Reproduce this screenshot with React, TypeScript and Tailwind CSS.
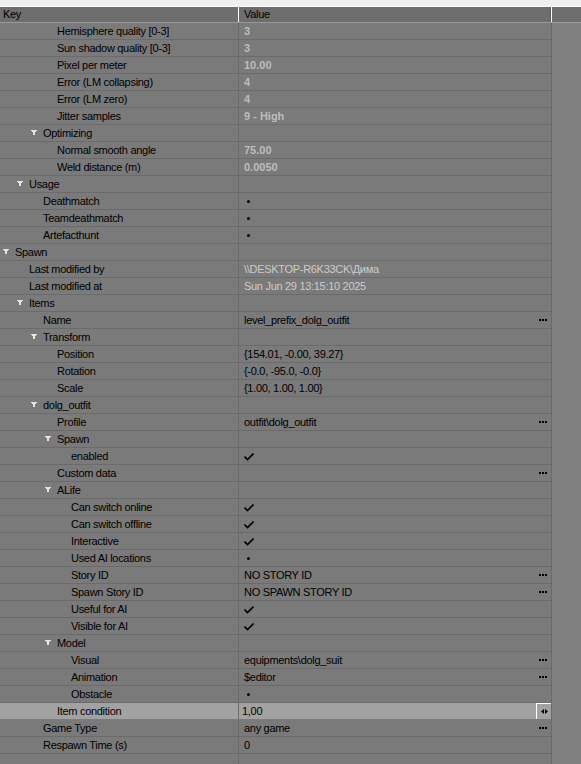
import React from 'react';

type Kind = 'text' | 'bold' | 'gray' | 'dot' | 'check' | 'none';

type Row = {
  label: string;
  level: number;
  group?: boolean;
  value?: string;
  kind?: Kind;
  btn?: boolean;
  selected?: boolean;
};

const rows: Row[] = [
  { label: 'Hemisphere quality [0-3]', level: 3, value: '3', kind: 'bold' },
  { label: 'Sun shadow quality [0-3]', level: 3, value: '3', kind: 'bold' },
  { label: 'Pixel per meter', level: 3, value: '10.00', kind: 'bold' },
  { label: 'Error (LM collapsing)', level: 3, value: '4', kind: 'bold' },
  { label: 'Error (LM zero)', level: 3, value: '4', kind: 'bold' },
  { label: 'Jitter samples', level: 3, value: '9 - High', kind: 'bold' },
  { label: 'Optimizing', level: 2, group: true },
  { label: 'Normal smooth angle', level: 3, value: '75.00', kind: 'bold' },
  { label: 'Weld distance (m)', level: 3, value: '0.0050', kind: 'bold' },
  { label: 'Usage', level: 1, group: true },
  { label: 'Deathmatch', level: 2, kind: 'dot' },
  { label: 'Teamdeathmatch', level: 2, kind: 'dot' },
  { label: 'Artefacthunt', level: 2, kind: 'dot' },
  { label: 'Spawn', level: 0, group: true },
  { label: 'Last modified by', level: 1, value: '\\\\DESKTOP-R6K33CK\\Дима', kind: 'gray' },
  { label: 'Last modified at', level: 1, value: 'Sun Jun 29 13:15:10 2025', kind: 'gray' },
  { label: 'Items', level: 1, group: true },
  { label: 'Name', level: 2, value: 'level_prefix_dolg_outfit', btn: true },
  { label: 'Transform', level: 2, group: true },
  { label: 'Position', level: 3, value: '{154.01, -0.00, 39.27}' },
  { label: 'Rotation', level: 3, value: '{-0.0, -95.0, -0.0}' },
  { label: 'Scale', level: 3, value: '{1.00, 1.00, 1.00}' },
  { label: 'dolg_outfit', level: 2, group: true },
  { label: 'Profile', level: 3, value: 'outfit\\dolg_outfit', btn: true },
  { label: 'Spawn', level: 3, group: true },
  { label: 'enabled', level: 4, kind: 'check' },
  { label: 'Custom data', level: 3, btn: true },
  { label: 'ALife', level: 3, group: true },
  { label: 'Can switch online', level: 4, kind: 'check' },
  { label: 'Can switch offline', level: 4, kind: 'check' },
  { label: 'Interactive', level: 4, kind: 'check' },
  { label: 'Used AI locations', level: 4, kind: 'dot' },
  { label: 'Story ID', level: 4, value: 'NO STORY ID', btn: true },
  { label: 'Spawn Story ID', level: 4, value: 'NO SPAWN STORY ID', btn: true },
  { label: 'Useful for AI', level: 4, kind: 'check' },
  { label: 'Visible for AI', level: 4, kind: 'check' },
  { label: 'Model', level: 3, group: true },
  { label: 'Visual', level: 4, value: 'equipments\\dolg_suit', btn: true },
  { label: 'Animation', level: 4, value: '$editor', btn: true },
  { label: 'Obstacle', level: 4, kind: 'dot' },
  { label: 'Item condition', level: 3, value: '1,00', selected: true },
  { label: 'Game Type', level: 2, value: 'any game', btn: true },
  { label: 'Respawn Time (s)', level: 2, value: '0' },
  { label: '', level: 0 },
];

const indent = ['pl-[15px]', 'pl-[29px]', 'pl-[43px]', 'pl-[57px]', 'pl-[71px]'];
const arrowIndent = ['pl-[3px]', 'pl-[17px]', 'pl-[31px]', 'pl-[45px]', 'pl-[59px]'];

// tree expander, a small funnel-shaped arrow
function Arrow() {
  return (
    <svg width="6" height="6" viewBox="0 0 6 6" className="mr-[6px] shrink-0">
      <path d="M0 0h6v1h-1v1h-1v3h-2v-3h-1v-1h-1z" fill="#e4e4e4" />
    </svg>
  );
}

function Dots() {
  return (
    <div className="absolute right-[4px] top-[7px] flex gap-[1px]">
      <span className="w-[2px] h-[2px] bg-black" />
      <span className="w-[2px] h-[2px] bg-black" />
      <span className="w-[2px] h-[2px] bg-black" />
    </div>
  );
}

function Check() {
  return (
    <svg width="10" height="8" viewBox="0 0 10 8" className="mt-[5px]">
      <path d="M0.5 3.5l3 3l6-6" stroke="#000" strokeWidth="1.6" fill="none" />
    </svg>
  );
}

function Value({ row }: { row: Row }) {
  if (row.kind === 'dot') return <span className="ml-[3px] mt-[7px] w-[3px] h-[3px] rounded-full bg-black" />;
  if (row.kind === 'check') return <Check />;
  if (!row.value) return null;
  if (row.kind === 'bold') return <span className="font-bold text-[#bdbdbd] tracking-normal">{row.value}</span>;
  if (row.kind === 'gray') return <span className="text-[#cbcbcb]">{row.value}</span>;
  return <span className="text-black">{row.value}</span>;
}

export default function App() {
  return (
    <div
      className="w-[581px] h-[764px] overflow-hidden bg-[#808080] text-[11px] tracking-[-0.3px] text-black"
      style={{ fontFamily: '"Liberation Sans", Arial, sans-serif' }}
    >
      <div className="h-[6px] bg-[#f0f0f0]" />
      <div className="flex h-[17px] border-t border-white bg-[#6e6e6e] border-b border-b-[#9a9a9a]">
        <div className="w-[239px] pl-[3px] leading-[15px] border-r border-white">Key</div>
        <div className="w-[312px] pl-[5px] leading-[15px] border-r border-[#5a5a5a]">Value</div>
        <div className="flex-1 border-l border-white" />
      </div>
      <div className="w-[552px] border-r border-[#6a6a6a]">
        {rows.map((row, i) => (
          <div
            key={i}
            className={`flex h-[17px] border-b ${row.selected ? 'bg-[#a2a2a2] border-[#7c7c7c]' : 'bg-[#7a7a7a] border-[#6b6b6b]'}`}
          >
            <div
              className={`w-[239px] flex items-center leading-[16px] border-r border-[#6b6b6b] ${row.group ? arrowIndent[row.level] : indent[row.level]}`}
            >
              {row.group && <Arrow />}
              <span className="whitespace-nowrap">{row.label}</span>
            </div>
            <div className={`relative flex-1 flex leading-[16px] ${row.selected ? 'pl-[3px]' : 'pl-[5px]'}`}>
              <Value row={row} />
              {row.btn && <Dots />}
              {row.selected && (
                <div className="absolute right-0 top-0 w-[15px] h-[16px] border-t border-l border-white bg-[#a2a2a2] flex items-center justify-center gap-[1px]">
                  <svg width="3" height="5" viewBox="0 0 3 5"><path d="M3 0v5L0 2.5z" fill="#000" /></svg>
                  <svg width="3" height="5" viewBox="0 0 3 5"><path d="M0 0v5l3-2.5z" fill="#000" /></svg>
                </div>
              )}
            </div>
          </div>
        ))}
      </div>
    </div>
  );
}
